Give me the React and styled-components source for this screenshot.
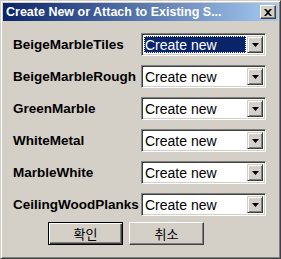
import React from "react";
import styled, { createGlobalStyle } from "styled-components";

const Global = createGlobalStyle`
  html, body { margin: 0; padding: 0; background: #d4d0c8; }
  * { box-sizing: border-box; }
`;

const Window = styled.div`
  width: 281px;
  height: 259px;
  background: #d4d0c8;
  border: 1px solid;
  border-color: #d4d0c8 #404040 #404040 #d4d0c8;
  box-shadow: inset 1px 1px #ffffff, inset -1px -1px #808080;
  padding: 2px;
  display: flex;
  flex-direction: column;
  font-family: "Liberation Sans", Arial, sans-serif;
`;

const TitleBar = styled.div`
  height: 18px;
  background: linear-gradient(to right, #0a246a, #a6caf0);
  display: flex;
  align-items: center;
  justify-content: space-between;
  padding: 0 2px 0 3px;
`;

const Title = styled.span`
  color: #ffffff;
  font-weight: bold;
  font-size: 12.5px;
  white-space: nowrap;
`;

const CloseButton = styled.div`
  width: 16px;
  height: 14px;
  background: #d4d0c8;
  border: 1px solid;
  border-color: #ffffff #404040 #404040 #ffffff;
  box-shadow: inset -1px -1px #808080;
  display: flex;
  align-items: center;
  justify-content: center;
`;

const Body = styled.div`
  padding: 12px 0 0 10px;
  display: flex;
  flex-direction: column;
`;

const Rows = styled.div`
  display: grid;
  grid-template-columns: 128px 125px;
  row-gap: 9px;
  align-items: center;
`;

const Label = styled.div`
  font-weight: bold;
  font-size: 13.5px;
  color: #000;
  white-space: nowrap;
`;

const Combo = styled.div`
  height: 23px;
  background: #ffffff;
  border: 1px solid;
  border-color: #808080 #ffffff #ffffff #808080;
  box-shadow: inset 1px 1px #404040, inset -1px -1px #d4d0c8;
  padding: 2px;
  display: flex;
`;

const Field = styled.div`
  flex: 1;
  display: flex;
  align-items: center;
  padding-left: 1px;
  font-size: 14px;
  color: ${(p) => (p.$selected ? "#ffffff" : "#000000")};
  background: ${(p) => (p.$selected ? "#0a246a" : "transparent")};
  outline: ${(p) => (p.$selected ? "1px dotted #ffffff" : "none")};
  outline-offset: -1px;
  margin-right: 1px;
  white-space: nowrap;
`;

const DropButton = styled.div`
  width: 16px;
  background: #d4d0c8;
  border: 1px solid;
  border-color: #d4d0c8 #404040 #404040 #d4d0c8;
  box-shadow: inset 1px 1px #ffffff, inset -1px -1px #808080;
  display: flex;
  align-items: center;
  justify-content: center;
`;

const Buttons = styled.div`
  display: flex;
  gap: 6px;
  padding-left: 35px;
  margin-top: 6px;
`;

const Button = styled.div`
  width: 75px;
  height: 23px;
  background: #d4d0c8;
  border: 1px solid;
  border-color: ${(p) =>
    p.$default ? "#000000" : "#ffffff #404040 #404040 #ffffff"};
  box-shadow: ${(p) =>
    p.$default
      ? "inset 1px 1px #ffffff, inset -1px -1px #404040, inset -2px -2px #808080"
      : "inset -1px -1px #808080"};
  display: flex;
  align-items: center;
  justify-content: center;
  font-family: "Noto Sans CJK KR", sans-serif;
  font-size: 13px;
  color: #000;
`;

const Arrow = () => (
  <svg width="7" height="4" viewBox="0 0 7 4">
    <path d="M0 0h7L3.5 4z" fill="#000" />
  </svg>
);

const names = [
  "BeigeMarbleTiles",
  "BeigeMarbleRough",
  "GreenMarble",
  "WhiteMetal",
  "MarbleWhite",
  "CeilingWoodPlanks",
];

export default function App() {
  return (
    <>
      <Global />
      <Window>
        <TitleBar>
          <Title>Create New or Attach to Existing S...</Title>
          <CloseButton>
            <svg width="8" height="7" viewBox="0 0 8 7">
              <path
                d="M0 0h2l2 2 2-2h2L5 3.5 8 7H6L4 5 2 7H0l3-3.5z"
                fill="#000"
              />
            </svg>
          </CloseButton>
        </TitleBar>
        <Body>
          <Rows>
            {names.map((n, i) => (
              <React.Fragment key={n}>
                <Label>{n}</Label>
                <Combo>
                  <Field $selected={i === 0}>Create new</Field>
                  <DropButton>
                    <Arrow />
                  </DropButton>
                </Combo>
              </React.Fragment>
            ))}
          </Rows>
          <Buttons>
            <Button $default>확인</Button>
            <Button>취소</Button>
          </Buttons>
        </Body>
      </Window>
    </>
  );
}
